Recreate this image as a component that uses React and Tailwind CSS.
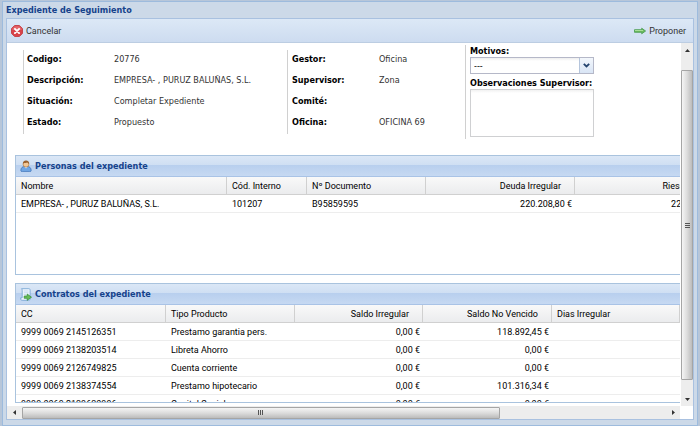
import React from 'react';

const personas = [
  { nombre: 'EMPRESA- , PURUZ BALUÑAS, S.L.', codigo: '101207', documento: 'B95859595', deuda: '220.208,80 €', riesgo: '220.208,80 €' },
];

const contratos = [
  { cc: '9999 0069 2145126351', tipo: 'Prestamo garantia pers.', irregular: '0,00 €', noVencido: '118.892,45 €' },
  { cc: '9999 0069 2138203514', tipo: 'Libreta Ahorro', irregular: '0,00 €', noVencido: '0,00 €' },
  { cc: '9999 0069 2126749825', tipo: 'Cuenta corriente', irregular: '0,00 €', noVencido: '0,00 €' },
  { cc: '9999 0069 2138374554', tipo: 'Prestamo hipotecario', irregular: '0,00 €', noVencido: '101.316,34 €' },
  { cc: '9999 0069 2139630996', tipo: 'Capital Social', irregular: '0,00 €', noVencido: '0,00 €' },
];

function CancelIcon() {
  return (
    <svg width="12" height="12" viewBox="0 0 12 12" aria-hidden="true">
      <path d="M3.6 .5h4.8l3.1 3.1v4.8l-3.1 3.1H3.6L.5 8.4V3.6z" fill="#d9434a" stroke="#c5464b" />
      <path d="M3.8 1.2h4.4l2.400 2.400v1.400H1.400V3.600z" fill="#e8777a" opacity=".7" />
      <path d="M3.900 3.900l4.200 4.200M8.100 3.900L3.900 8.100" stroke="#fff" strokeWidth="1.900" strokeLinecap="round" />
    </svg>
  );
}

function ArrowIcon() {
  return (
    <svg width="12" height="8" viewBox="0 0 12 8" aria-hidden="true">
      <path d="M.5 2.700h7.200V1.200L11.600 4 7.700 6.800V5.300H.5z" fill="#6cba5c" stroke="#459a4c" strokeWidth=".8" />
      <path d="M1 3.500h8" stroke="#b9e8a8" strokeWidth=".8" />
    </svg>
  );
}

function UserIcon() {
  return (
    <svg width="12" height="12" viewBox="0 0 12 12" aria-hidden="true">
      <path d="M.8 10.400C.8 8 2.500 6.700 4 6.500h4c1.500.2 3.200 1.500 3.200 3.900 0 .8-.6 1.200-1.400 1.200H2.200c-.8 0-1.400-.4-1.400-1.200z" fill="#6fa5e3" stroke="#3a6fb5" strokeWidth=".7" />
      <path d="M4.400 6.800L6 8.600l1.600-1.800z" fill="#e6f0fb" />
      <circle cx="6" cy="4.200" r="2.900" fill="#f3c795" stroke="#a8703a" strokeWidth=".6" />
      <path d="M2.900 4.200C2.600 1.800 4 .5 6 .5s3.500 1.200 3.100 3.600C8.300 3.700 7.800 3 7.500 2.500 6.500 3.200 4.200 3 3.700 3.100z" fill="#9a6230" />
    </svg>
  );
}

function ScriptIcon() {
  return (
    <svg width="12" height="13" viewBox="0 0 12 13" aria-hidden="true">
      <path d="M1.500.7h7.300c1 0 1.300.6 1.300 1.500v8.600c0 .9-.5 1.500-1.400 1.500H2.200C1.200 12.300.7 11.700.7 10.900V9.800h1.500V2.500C2.200 1.600 2 1.200 1.500.7z" fill="#eef5fd" stroke="#6f9fd0" strokeWidth=".8" />
      <path d="M3.800 3h4.700M3.800 4.800h4.700M3.800 6.600H6" stroke="#b6d0ea" strokeWidth=".7" />
      <path d="M4.200 8h3V6L11.500 9.200 7.200 12.300v-2h-3z" fill="#67bd57" stroke="#2f8a35" strokeWidth=".7" />
    </svg>
  );
}

function Triangle({ className }) {
  return (
    <svg width="5" height="3" viewBox="0 0 5 3" className={className} aria-hidden="true">
      <path d="M0 3L2.500 0 5 3z" fill="#333" />
    </svg>
  );
}

function Field({ label, value }) {
  return (
    <div className="flex h-[21px] items-start pt-[3px]">
      <dt className="w-[87px] shrink-0 font-bold text-black">{label}</dt>
      <dd className="whitespace-nowrap text-[#333]">{value}</dd>
    </div>
  );
}

function Panel({ title, icon, children }) {
  return (
    <section className="h-[120px] shrink-0 overflow-hidden border border-[#a9c3de] bg-white">
      <h2 className="flex h-[21px] items-center gap-[3px] border-b border-[#a9c3e6] bg-[linear-gradient(#dbe7f6,#cfdff3_45%,#b8cfee_46%,#c6d9f2)] pl-1 text-[9px] font-bold text-[#15428b]">
        {icon}
        {title}
      </h2>
      {children}
    </section>
  );
}

function Head({ children, right }) {
  return (
    <th className={right ? 'border-r border-[#d0d0d0] pr-[13px] text-right font-normal' : 'border-r border-[#d0d0d0] pl-[5px] text-left font-normal'}>
      {children}
    </th>
  );
}

function Cell({ children, right }) {
  return <td className={right ? 'pr-[3px] text-right' : 'pl-[5px]'}>{children}</td>;
}

function Grid({ widths, head, children }) {
  return (
    <table className="w-full table-fixed border-separate border-spacing-0 whitespace-nowrap font-[Roboto,sans-serif] text-[9px] leading-[12px] text-black">
      <colgroup>
        {widths.map((w, i) => (
          <col key={i} className={w} />
        ))}
        <col />
      </colgroup>
      <thead>
        <tr className="h-[18px] bg-[linear-gradient(#f9f9f9,#eaebed)] *:border-b *:border-b-[#d0d0d0]">{head}</tr>
      </thead>
      <tbody className="[&_td]:border-b [&_td]:border-[#ededed] [&_tr]:h-[18px]">{children}</tbody>
    </table>
  );
}

export default function App() {
  return (
    <div className="flex h-screen min-h-[426px] w-full flex-col bg-[#b7c6d9] px-[2px] pt-px font-['DejaVu_Sans_Condensed','DejaVu_Sans',sans-serif] text-[9px] leading-[12px]">
      <main className="flex min-h-0 flex-1 flex-col border border-[#9dbbdd] bg-[#ccd9e8] px-[3px] pb-[5px]">
        <h1 className="flex h-4 shrink-0 items-center font-bold text-[#15428b]">Expediente de Seguimiento</h1>

        <div className="flex min-h-0 flex-1 flex-col border border-[#a9c1e0]">
          <div className="flex h-6 shrink-0 items-center justify-between border-b border-[#bccde2] bg-[linear-gradient(#dce8f6,#cddcf0)] pl-1 pr-[7px] font-[Roboto,sans-serif] text-[#333]">
            <button type="button" className="flex items-center gap-[3px]">
              <CancelIcon />
              Cancelar
            </button>
            <button type="button" className="flex items-center gap-[3px]">
              <ArrowIcon />
              Proponer
            </button>
          </div>

          <div className="flex min-h-0 flex-1">
            <div className="min-w-0 flex-1 overflow-hidden bg-white">
              <div className="flex w-[770px] flex-col gap-2 pl-2">
                <div className="flex h-[104px] items-start pl-2">
                  <dl className="mt-[7px] w-[264px] shrink-0 border-l border-[#d0d0d0] pl-[3px]">
                    <Field label="Codigo:" value="20776" />
                    <Field label="Descripción:" value="EMPRESA- , PURUZ BALUÑAS, S.L." />
                    <Field label="Situación:" value="Completar Expediente" />
                    <Field label="Estado:" value="Propuesto" />
                  </dl>
                  <dl className="mt-[7px] w-[178px] shrink-0 border-l border-[#d0d0d0] pl-1">
                    <Field label="Gestor:" value="Oficina" />
                    <Field label="Supervisor:" value="Zona" />
                    <Field label="Comité:" value="" />
                    <Field label="Oficina:" value="OFICINA 69" />
                  </dl>
                  <div className="mt-[2px] flex h-[94px] flex-col border-l border-[#d0d0d0] pl-1">
                    <label htmlFor="motivos" className="font-bold">Motivos:</label>
                    <div className="flex h-[17px] w-[124px] border border-[#b5b8c8] bg-white">
                      <select id="motivos" className="min-w-0 flex-1 appearance-none bg-[linear-gradient(#eee,#fff_3px)] pl-[3px]">
                        <option>---</option>
                      </select>
                      <span className="flex w-[14px] items-center justify-center border-l border-[#b5c5dc] bg-[linear-gradient(#f3f7fc,#d9e5f5)]">
                        <svg width="7" height="5" viewBox="0 0 7 5" aria-hidden="true">
                          <path d="M.8.8L3.500 3.500 6.200.8" fill="none" stroke="#26456f" strokeWidth="1.800" />
                        </svg>
                      </span>
                    </div>
                    <label htmlFor="observaciones" className="mt-[3px] font-bold">Observaciones Supervisor:</label>
                    <textarea id="observaciones" className="h-12 w-[124px] shrink-0 resize-none border border-[#cfd0d2] bg-[linear-gradient(#f1f1f1,#fff_3px)]" />
                  </div>
                </div>

                <Panel title="Personas del expediente" icon={<UserIcon />}>
                  <Grid
                    widths={['w-[211px]', 'w-[80px]', 'w-[119px]', 'w-[149px]', 'w-[151px]']}
                    head={
                      <>
                        <Head>Nombre</Head>
                        <Head>Cód. Interno</Head>
                        <Head>Nº Documento</Head>
                        <Head right>Deuda Irregular</Head>
                        <Head right>Riesgo Total</Head>
                        <th />
                      </>
                    }
                  >
                    {personas.map((p) => (
                      <tr key={p.codigo}>
                        <Cell>{p.nombre}</Cell>
                        <Cell>{p.codigo}</Cell>
                        <Cell>{p.documento}</Cell>
                        <Cell right>{p.deuda}</Cell>
                        <Cell right>{p.riesgo}</Cell>
                        <td />
                      </tr>
                    ))}
                  </Grid>
                </Panel>

                <Panel title="Contratos del expediente" icon={<ScriptIcon />}>
                  <Grid
                    widths={['w-[150px]', 'w-[129px]', 'w-[128px]', 'w-[129px]', 'w-[128px]']}
                    head={
                      <>
                        <Head>CC</Head>
                        <Head>Tipo Producto</Head>
                        <Head right>Saldo Irregular</Head>
                        <Head right>Saldo No Vencido</Head>
                        <Head>Dias Irregular</Head>
                        <th />
                      </>
                    }
                  >
                    {contratos.map((c) => (
                      <tr key={c.cc}>
                        <Cell>{c.cc}</Cell>
                        <Cell>{c.tipo}</Cell>
                        <Cell right>{c.irregular}</Cell>
                        <Cell right>{c.noVencido}</Cell>
                        <td />
                        <td />
                      </tr>
                    ))}
                  </Grid>
                </Panel>
              </div>
            </div>

            <div className="flex w-[13px] shrink-0 flex-col items-center border-l border-white bg-[#ededed]">
              <span className="flex h-[27px] shrink-0 pt-[6px]"><Triangle /></span>
              <span className="flex w-full flex-1 items-center justify-center rounded-[1px] border border-[#a5a5a5] bg-[linear-gradient(90deg,#f5f5f5,#dcdcdc_50%,#bcbcbc)]">
                <span className="flex flex-col gap-px">
                  <i className="h-px w-[5px] bg-[#555]" />
                  <i className="h-px w-[5px] bg-[#555]" />
                  <i className="h-px w-[5px] bg-[#555]" />
                </span>
              </span>
              <span className="flex h-[26px] shrink-0 items-end pb-[5px]"><Triangle className="rotate-180" /></span>
            </div>
          </div>

          <div className="flex h-[13px] shrink-0 bg-white pr-[13px]">
            <div className="flex flex-1 items-center bg-[#ededed]">
              <span className="flex w-[15px] justify-center"><Triangle className="-rotate-90" /></span>
              <span className="flex h-3 w-[71%] items-center justify-center gap-px rounded-[1px] border border-[#a5a5a5] bg-[linear-gradient(#f5f5f5,#dcdcdc_50%,#bcbcbc)]">
                <i className="h-[5px] w-px bg-[#555]" />
                <i className="h-[5px] w-px bg-[#555]" />
                <i className="h-[5px] w-px bg-[#555]" />
              </span>
              <span className="flex flex-1 justify-end pr-1"><Triangle className="rotate-90" /></span>
            </div>
          </div>
        </div>
      </main>
    </div>
  );
}
